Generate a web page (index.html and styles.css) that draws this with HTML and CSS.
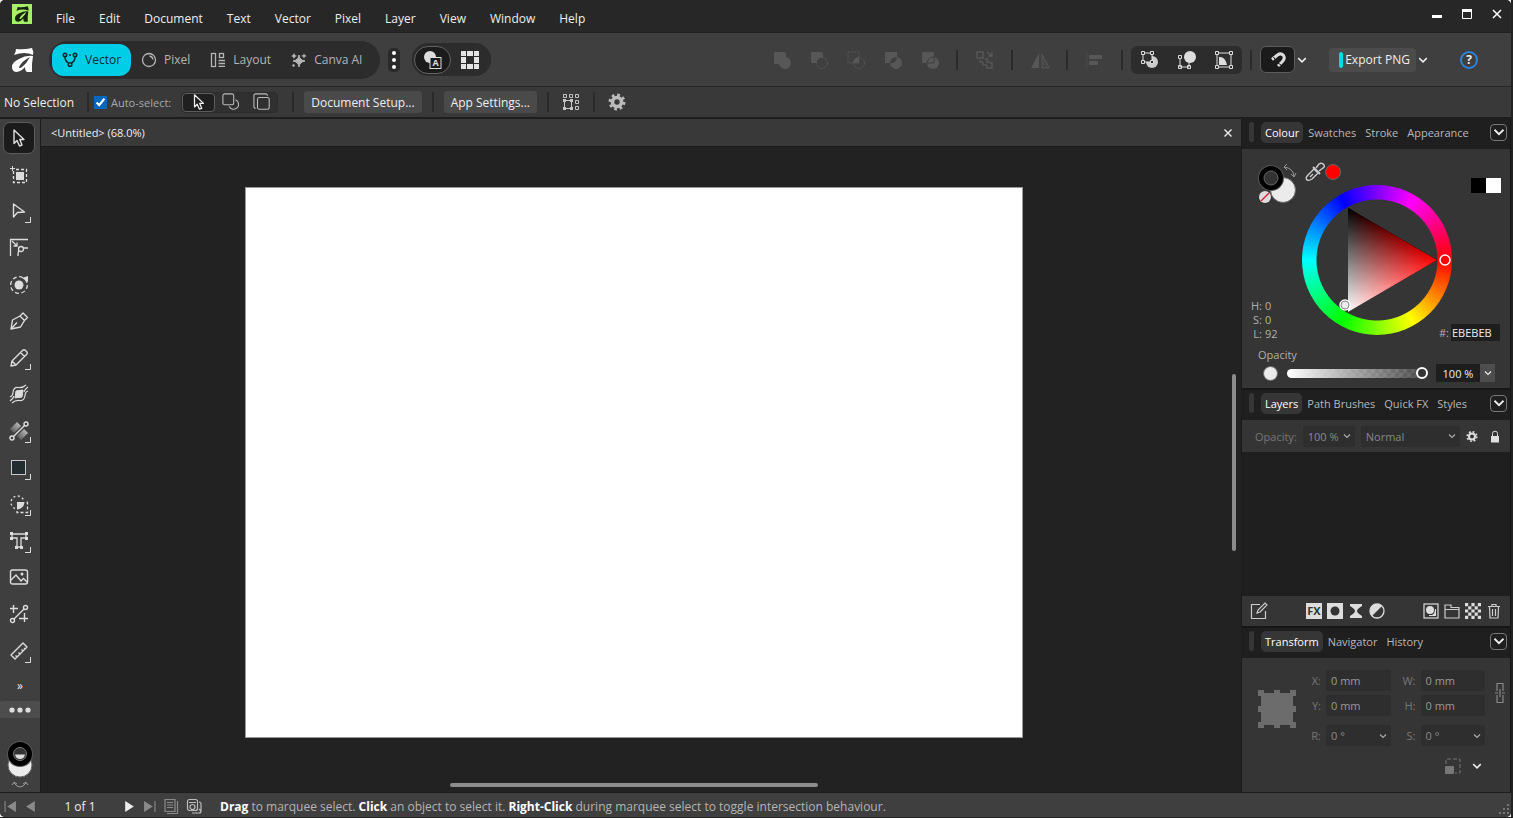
FILE: index.html
```html
<!DOCTYPE html>
<html lang="en">
<head>
    <meta charset="UTF-8">
    <meta name="viewport" content="width=device-width, initial-scale=1.0">
    <title>Untitled</title>
    <link rel="stylesheet" href="styles.css">
</head>
<body>

    <!-- Shared shapes -->
    <svg class="symbols" aria-hidden="true">
        <symbol id="chevron" viewBox="0 0 8 8"><path d="M1 2.5L4 5.5L7 2.5" fill="none" stroke="currentColor" stroke-width="1.2"/></symbol>
        <symbol id="logo" viewBox="0 0 22 24">
            <path d="M4 1Q12 2 20 0Q22 4 21 7Q13 3 2 7Q4 4 4 1Z"/>
            <path fill-rule="evenodd" d="M21 8Q14 7 7 11Q0 14 0 19Q0 24 5 24Q10 23 13 19Q13 23 15 24H20V16ZM18 9Q10 13 7 19Q7 21 10 19Q15 15 18 9Z"/>
        </symbol>
        <symbol id="arrow" viewBox="0 0 20 20"><path d="M5 2V15.500L8 12.500L10.500 18L13 17L10.800 11.500H15Z" fill="none" stroke="currentColor" stroke-width="1.4" stroke-linejoin="round"/></symbol>
        <symbol id="corner" viewBox="0 0 6 6"><path d="M5.500 0V5.500H0" fill="none" stroke="currentColor"/></symbol>
    </svg>

    <div class="frame">
    <div class="window">

        <!-- Menu bar -->
        <header class="menu-bar">
            <svg class="app-icon" viewBox="0 0 20 20"><rect width="20" height="20" fill="#a6f065"/><use href="#logo" x="3" y="2" width="14" height="16" fill="#17220f"/></svg>
            <nav class="menu">
                <a href="#">File</a>
                <a href="#">Edit</a>
                <a href="#">Document</a>
                <a href="#">Text</a>
                <a href="#">Vector</a>
                <a href="#">Pixel</a>
                <a href="#">Layer</a>
                <a href="#">View</a>
                <a href="#">Window</a>
                <a href="#">Help</a>
            </nav>
            <div class="window-buttons">
                <button aria-label="Minimise"><svg viewBox="0 0 10 10"><path d="M0 7.500H10" stroke="#fff" stroke-width="3"/></svg></button>
                <button aria-label="Maximise"><svg viewBox="0 0 10 10"><path d="M0.500 0.500H9.500V9.500H0.500Z" fill="none" stroke="#fff"/><path d="M0 1.500H10" stroke="#fff" stroke-width="3"/></svg></button>
                <button aria-label="Close"><svg viewBox="0 0 10 10"><path d="M1 1L9 9M9 1L1 9" stroke="#fff" stroke-width="1.500"/></svg></button>
            </div>
        </header>

        <!-- Main toolbar -->
        <div class="toolbar">
            <svg class="brand" viewBox="0 0 22 24"><use href="#logo" fill="#fff"/></svg>
            <div class="personas">
                <button class="persona active">
                    <svg viewBox="0 0 16 16"><g fill="none" stroke="currentColor" stroke-width="1.600"><circle cx="3" cy="3" r="1.700"/><circle cx="13" cy="3" r="1.700"/><circle cx="8" cy="12.500" r="1.800"/><path d="M3 5Q3 9 6.500 11M13 5Q13 9 9.500 11M8 2V4"/></g></svg>
                    Vector
                </button>
                <button class="persona">
                    <svg viewBox="0 0 16 16"><g fill="none" stroke="currentColor" stroke-width="1.300"><circle cx="8" cy="8" r="6.500"/><path d="M8.500 4Q11.500 4.500 12 7.500"/></g></svg>
                    Pixel
                </button>
                <button class="persona">
                    <svg viewBox="0 0 16 16"><g fill="none" stroke="currentColor" stroke-width="1.300"><rect x="1.500" y="1.500" width="4" height="13"/><rect x="9.500" y="1.500" width="4" height="4"/><path d="M8.500 8.500H15M8.500 11.500H15M8.500 14.300H15"/></g></svg>
                    Layout
                </button>
                <button class="persona">
                    <svg viewBox="0 0 16 16"><path d="M8 3Q8.500 8 14 9Q8.500 10 8 15Q7.500 10 2 9Q7.500 8 8 3Z" fill="currentColor" stroke="currentColor"/><path d="M3 1L4 3L6 4L4 5L3 7L2 5L0 4L2 3ZM13 1L13.700 3L16 4L13.700 4.700L13 7L12.300 4.700L10 4L12.300 3ZM3 12L4 14L2 15L1 13Z" fill="currentColor"/></svg>
                    Canva AI
                </button>
            </div>
            <button class="dots" aria-label="More personas"><svg viewBox="0 0 12 24"><g fill="#fff"><circle cx="6" cy="5" r="2"/><circle cx="6" cy="12" r="2"/><circle cx="6" cy="19" r="2"/></g></svg></button>
            <div class="view-modes">
                <button class="view-mode active" aria-label="Preview"><svg viewBox="0 0 20 20"><circle cx="7" cy="7" r="6" fill="#ddd"/><rect x="7" y="7.500" width="11" height="11" fill="#1b1b1b" stroke="#ddd"/><text x="12.500" y="16" text-anchor="middle" class="icon-text">A</text></svg></button>
                <button class="view-mode" aria-label="Grid"><svg viewBox="0 0 20 20"><path d="M1 1H6V6H1ZM7 1H13V6H7ZM14 1H19V6H14ZM1 7H6V13H1ZM14 7H19V13H14ZM1 14H6V19H1ZM7 14H13V19H7ZM14 14H19V19H14Z" fill="#e4e4e4"/></svg></button>
            </div>

            <div class="toolbar-right">
                <div class="faded">
                    <button disabled aria-label="Add"><svg viewBox="0 0 20 20"><path d="M3 2H12Q14 2 14 4V7A6 6 0 1 1 7 14H3Q2 14 2 12V4Q2 2 3 2Z" fill="#575757"/></svg></button>
                    <button disabled aria-label="Subtract"><svg viewBox="0 0 20 20"><path d="M3 2H12Q14 2 14 4V7Q8 7 7 13H3Q2 13 2 12V4Q2 2 3 2Z" fill="#575757"/><circle cx="13" cy="13" r="5.500" fill="none" stroke="#575757" stroke-dasharray="3 1"/></svg></button>
                    <button disabled aria-label="Intersect"><svg viewBox="0 0 20 20"><g fill="none" stroke="#575757" stroke-dasharray="2 1"><path d="M2 2H13V13H2Z"/><circle cx="13" cy="13" r="5.500"/></g><path d="M7 13Q8 7 13 7V13Z" fill="#575757"/></svg></button>
                    <button disabled aria-label="Divide"><svg viewBox="0 0 20 20"><path d="M3 2H14V7Q8 7 7 13H2V3Z" fill="#575757"/><path d="M14 7A6 6 0 1 1 7 13Q13 14 14 7Z" fill="#575757"/></svg></button>
                    <button disabled aria-label="Combine"><svg viewBox="0 0 20 20"><rect x="2" y="2" width="12" height="11" rx="1" fill="#575757"/><circle cx="13" cy="13" r="6" fill="#575757"/><path d="M7 13Q8 7 14 7V13Z" fill="none" stroke="#3f3f3f"/></svg></button>
                    <i class="sep"></i>
                    <button disabled aria-label="Arrange"><svg viewBox="0 0 20 20"><g fill="none" stroke="#575757" stroke-width="1.500"><rect x="2" y="2" width="6" height="6"/><path d="M5 10V12H8M8 12V15H12M12 15V18H17V13H15M10 9H12V12H15M12 2L17 6M17 2V6H13"/></g></svg></button>
                    <i class="sep"></i>
                    <button disabled aria-label="Flip"><svg viewBox="0 0 20 20"><path d="M9 3V18H1Z" fill="#575757"/><path d="M12 4V18H19ZM12 8L18 16M12 12L17 18M12 16L14 18" fill="none" stroke="#575757"/></svg></button>
                    <i class="sep"></i>
                    <button disabled aria-label="Align"><svg viewBox="0 0 20 20"><path d="M2 3V19" stroke="#4a4a4a"/><rect x="4" y="5" width="13" height="4" rx="1" fill="#575757"/><rect x="4" y="11" width="9" height="4" rx="1" fill="#575757"/></svg></button>
                    <i class="sep"></i>
                </div>
                <div class="insert-modes">
                    <button aria-label="Insert behind"><svg viewBox="0 0 20 20"><circle cx="12" cy="12" r="6" fill="#ccc"/><rect x="3" y="3" width="9" height="9" fill="#2f2f2f"/><g fill="none" stroke="#ddd"><rect x="3" y="3" width="9" height="9"/><path d="M1.500 1.500H4.500V4.500H1.500ZM10.500 1.500H13.500V4.500H10.500ZM1.500 10.500H4.500V13.500H1.500ZM10.500 10.500H13.500V13.500H10.500Z" fill="#2f2f2f"/></g></svg></button>
                    <button aria-label="Insert on top"><svg viewBox="0 0 20 20"><g fill="none" stroke="#ddd"><path d="M3 8V17H12V12M1.500 5.500H4.500V8.500H1.500ZM1.500 15.500H4.500V18.500H1.500ZM10.500 15.500H13.500V18.500H10.500Z"/></g><circle cx="13" cy="7" r="6" fill="#ddd"/></svg></button>
                    <button aria-label="Insert inside"><svg viewBox="0 0 20 20"><g fill="#2f2f2f" stroke="#ddd"><rect x="3" y="3" width="14" height="14"/><path d="M1.500 1.500H4.500V4.500H1.500ZM15.500 1.500H18.500V4.500H15.500ZM1.500 15.500H4.500V18.500H1.500ZM15.500 15.500H18.500V18.500H15.500Z"/></g><path d="M5 7Q11 6 13 15H5Z" fill="#ddd"/></svg></button>
                </div>
                <i class="sep"></i>
                <button class="snap" aria-label="Snapping"><svg viewBox="0 0 20 20"><path d="M4 9.500L9.500 5Q13 2.500 15.500 5.500Q17.500 8.500 14 12L10 16" fill="none" stroke="#ddd" stroke-width="3"/><path d="M5.500 7L7.500 10M10 13L13 15" stroke="#1b1b1b"/></svg></button>
                <button class="drop" aria-label="Snapping options"><svg><use href="#chevron"/></svg></button>
                <button class="export"><i></i>Export PNG</button>
                <button class="drop" aria-label="Export options"><svg><use href="#chevron"/></svg></button>
                <button class="help" aria-label="Help">?</button>
            </div>
        </div>

        <!-- Context bar -->
        <div class="context-bar">
            <span class="selection">No Selection</span>
            <i class="sep"></i>
            <label class="auto-select"><input type="checkbox" checked>Auto-select:</label>
            <div class="select-modes">
                <button class="active" aria-label="Object"><svg viewBox="0 0 20 20"><use href="#arrow"/></svg></button>
                <button aria-label="Group"><svg viewBox="0 0 20 20"><g fill="none" stroke="#bbb" stroke-width="1.200"><rect x="1" y="1" width="12" height="12" rx="2"/><path d="M15 7.500A5.500 5.500 0 1 1 8 15"/></g></svg></button>
                <button aria-label="Layer"><svg viewBox="0 0 20 20"><g fill="none" stroke="#bbb" stroke-width="1.200"><rect x="5" y="5" width="13" height="13" rx="2"/><path d="M3 17Q1 17 1 15V3Q1 1 3 1H14Q16 1 16 3"/></g></svg></button>
            </div>
            <i class="sep wide"></i>
            <button class="plain">Document Setup...</button>
            <i class="sep"></i>
            <button class="plain">App Settings...</button>
            <i class="sep"></i>
            <button class="icon" aria-label="Transform objects separately"><svg viewBox="0 0 18 18"><g fill="none" stroke="#c4c4c4"><path d="M1.500 1.500H4.500V4.500H1.500ZM7.500 1.500H10.500V4.500H7.500ZM13.500 1.500H16.500V4.500H13.500ZM13.500 7.500H16.500V10.500H13.500ZM13.500 13.500H16.500V16.500H13.500ZM2.500 7.500H9.500V15.500H2.500Z"/><path d="M1 7.500H4M8 7.500H11M1 15.500H4M8 15.500H11" stroke-width="3"/></g></svg></button>
            <i class="sep"></i>
            <button class="icon" aria-label="Settings"><svg viewBox="0 0 20 20"><circle cx="10" cy="10" r="5" fill="none" stroke="#bbb" stroke-width="4"/><circle cx="10" cy="10" r="7.800" fill="none" stroke="#bbb" stroke-width="3.200" stroke-dasharray="3.060 3.060"/></svg></button>
        </div>

        <div class="workspace">

            <!-- Tools -->
            <aside class="tools">
                <div class="tool-list">
                    <button class="tool active" aria-label="Move"><svg viewBox="0 0 20 20"><use href="#arrow"/></svg></button>
                    <button class="tool" aria-label="Artboard"><svg viewBox="0 0 20 20"><rect x="7" y="7" width="8" height="8" fill="#ddd"/><path d="M4.500 6V17.500H17.500V4.500H6" fill="none" stroke="#ddd" stroke-width="1.300" stroke-dasharray="3 2"/><path d="M1 3.500H6M3.500 1V6" stroke="#ddd"/></svg></button>
                    <button class="tool" aria-label="Node"><svg viewBox="0 0 20 20"><path d="M4.500 3V16L8.500 11.500L15.500 11Z" fill="none" stroke="#ddd" stroke-width="1.400" stroke-linejoin="round"/></svg><svg class="corner"><use href="#corner"/></svg></button>
                    <button class="tool" aria-label="Corner"><svg viewBox="0 0 20 20"><g fill="none" stroke="#ddd" stroke-width="1.300"><path d="M1 1.500H19M1.500 1V18M3 3L8 8M8 4.500V8H4.500M9 18Q9 12 11 10H19"/><circle cx="12" cy="11" r="2.500" fill="#3f3f3f"/></g></svg></button>
                    <button class="tool" aria-label="Contour"><svg viewBox="0 0 20 20"><circle cx="10" cy="10" r="4.500" fill="#ddd"/><circle cx="10" cy="10" r="8.300" fill="none" stroke="#ddd" stroke-width="1.300" stroke-dasharray="4 2.500"/><path d="M13 3L19 1V7Z" fill="#ddd"/></svg></button>
                    <button class="tool" aria-label="Pen"><svg viewBox="0 0 20 20"><g fill="none" stroke="#ddd" stroke-width="1.400" stroke-linejoin="round"><path d="M2 18L3.500 9L11 5L15.500 9.500L11.500 16ZM2 18L8 11.500M11.500 4.500L14 2L18.500 6.500L16 9"/></g></svg></button>
                    <button class="tool" aria-label="Pencil"><svg viewBox="0 0 20 20"><g fill="none" stroke="#ddd" stroke-width="1.400" stroke-linejoin="round"><path d="M2 18L3 13L13.500 2.500Q15 1 16.500 2.500L17.500 3.500Q19 5 17.500 6.500L7 17ZM11.500 4.500L15.500 8.500M3 13L7 17"/></g></svg><svg class="corner"><use href="#corner"/></svg></button>
                    <button class="tool" aria-label="Vector brush"><svg viewBox="0 0 20 20"><path d="M7 7L14 6L13 13L6 14Z" fill="#ddd" stroke="#ddd" stroke-linejoin="round"/><path d="M1 13Q4 12 4 8Q5 3 9 3.500Q14 4 17 1M1 17Q4 15 5 12M15 8Q16 5 19 3M3 19Q6 16 11 16.500Q15 17 16 12Q16 8 19 7" fill="none" stroke="#ddd" stroke-width="1.200"/></svg></button>
                    <button class="tool" aria-label="Gradient"><svg viewBox="0 0 20 20"><defs><linearGradient id="bar" x1="1" y1="0" x2="0" y2="1"><stop stop-color="#ccc"/><stop offset="1" stop-color="#4a4a4a"/></linearGradient></defs><path d="M1 8L8 1L12 5L5 12Z" fill="url(#bar)"/><path d="M8 15L15 8L19 12L12 19Z" fill="url(#bar)"/><g fill="none" stroke="#ddd" stroke-width="1.400"><path d="M4.500 15.500L15.500 4.500"/><circle cx="3" cy="17" r="2"/><circle cx="17" cy="3" r="2"/></g></svg><svg class="corner"><use href="#corner"/></svg></button>
                    <button class="tool" aria-label="Rectangle"><svg viewBox="0 0 20 20"><rect x="2.500" y="2.500" width="14" height="14" fill="#232d30" stroke="#c8c8c8"/></svg><svg class="corner"><use href="#corner"/></svg></button>
                    <button class="tool" aria-label="Shape builder"><svg viewBox="0 0 20 20"><g fill="none" stroke="#ddd" stroke-width="1.300"><path d="M6 14.500A6.500 6.500 0 1 1 14.500 6" stroke-dasharray="2 2.500"/><path d="M8 17V18.500H18.500V8.500H17" stroke-dasharray="3 2"/></g><path d="M8 8H15.500Q15 15 8 15.500Z" fill="#ddd"/></svg><svg class="corner"><use href="#corner"/></svg></button>
                    <button class="tool" aria-label="Text"><svg viewBox="0 0 20 20"><g fill="none" stroke="#ddd" stroke-width="1.300"><path d="M3 3H17V7H12V16H8V7H3Z"/></g><path d="M1 1H4V4H1ZM16 1H19V4H16ZM1 6H4V9H1ZM16 6H19V9H16ZM6 15H9V18H6ZM11 15H14V18H11Z" fill="#ddd"/></svg><svg class="corner"><use href="#corner"/></svg></button>
                    <button class="tool" aria-label="Image"><svg viewBox="0 0 20 20"><g fill="none" stroke="#ddd" stroke-width="1.400"><rect x="1.500" y="3" width="17" height="14" rx="2"/><path d="M2 13L7 8L12 14L14.500 11.500L18 15"/></g><circle cx="13" cy="7" r="1.500" fill="#ddd"/></svg></button>
                    <button class="tool" aria-label="Vector crop"><svg viewBox="0 0 20 20"><g fill="none" stroke="#ddd" stroke-width="1.400"><path d="M4.500 1V9M1 4.500H9M15.500 9V18M10 14.500H19M5 15L15 5"/><circle cx="3.500" cy="16.500" r="2"/><circle cx="16.500" cy="3.500" r="2"/></g></svg></button>
                    <button class="tool" aria-label="Measure"><svg viewBox="0 0 20 20"><g fill="none" stroke="#ddd" stroke-width="1.400" stroke-linejoin="round"><path d="M2 14L14 2L18 6L6 18ZM8 16L6.500 14.500M11 13L9.500 11.500M14 10L12.500 8.500M16 8L15 7"/></g></svg><svg class="corner"><use href="#corner"/></svg></button>
                </div>
                <button class="more">»</button>
                <button class="ellipsis" aria-label="Customise tools"><svg viewBox="0 0 24 6"><g fill="#e0e0e0"><circle cx="4" cy="3" r="2.600"/><circle cx="12" cy="3" r="2.600"/><circle cx="20" cy="3" r="2.600"/></g></svg></button>
                <button class="tool-colours" aria-label="Fill and stroke"><svg viewBox="0 0 30 52"><circle cx="15" cy="25" r="12" fill="#ebebeb" stroke="#666"/><circle cx="15" cy="14" r="13" fill="#555"/><circle cx="15" cy="14" r="9" fill="none" stroke="#000" stroke-width="6"/><circle cx="15" cy="14" r="6.500" fill="#333" stroke="#777"/><path d="M10 14.500H20Q19 19 15 19Q11 19 10 14.500Z" fill="#ddd"/><path d="M9 43Q15 51 21 43M7 45L9 42L12 44M18 44L21 42L23 45" fill="none" stroke="#999"/></svg></button>
            </aside>

            <!-- Document -->
            <main class="document">
                <div class="document-tab">
                    <span>&lt;Untitled&gt; (68.0%)</span>
                    <button aria-label="Close document"><svg viewBox="0 0 10 10"><path d="M1.500 1.500L8.500 8.500M8.500 1.500L1.500 8.500" stroke="#eee" stroke-width="1.400"/></svg></button>
                </div>
                <div class="canvas">
                    <div class="stage"><div class="page"></div></div>
                    <div class="scroll-v"><i></i></div>
                    <div class="scroll-h"><i></i></div>
                </div>
            </main>

            <!-- Studio panels -->
            <aside class="studio">
                <section class="panel">
                    <div class="tabs">
                        <i class="handle"></i>
                        <button class="tab active">Colour</button>
                        <button class="tab">Swatches</button>
                        <button class="tab">Stroke</button>
                        <button class="tab">Appearance</button>
                        <button class="panel-menu" aria-label="Colour panel menu"><svg><use href="#chevron"/></svg></button>
                    </div>
                    <div class="colour">
                        <div class="colour-left">
                            <svg class="fill-stroke" viewBox="0 0 42 42"><circle cx="27" cy="27" r="12.500" fill="#ebebeb" stroke="#666"/><circle cx="15" cy="15" r="13" fill="#555"/><circle cx="15" cy="15" r="9" fill="none" stroke="#000" stroke-width="6"/><circle cx="15" cy="15" r="7" fill="#333" stroke="#666"/><circle cx="9" cy="34" r="6" fill="#ddd"/><path d="M5 38L13 30" stroke="#e0203a" stroke-width="1.500"/><path d="M28 4Q37 5 38 13M31 1L28 4L31 7M35 11L38 14L40 10" fill="none" stroke="#999"/></svg>
                            <dl class="hsl">
                                <dt>H:</dt><dd>0</dd>
                                <dt>S:</dt><dd>0</dd>
                                <dt>L:</dt><dd>92</dd>
                            </dl>
                        </div>
                        <div class="colour-middle">
                            <div class="picker">
                                <button aria-label="Colour picker"><svg viewBox="0 0 20 20"><g fill="none" stroke="#ccc" stroke-width="1.400" stroke-linejoin="round"><path d="M2 18Q0 16 3 13L9 7L13 11L7 17Q4 19 2 18ZM5 15L8 12"/><path d="M8 5L15 12" stroke-width="2"/><path d="M11 6L14 2Q17 0 19 3Q20 5 18 6L14 9"/></g></svg></button>
                                <i class="picked"></i>
                            </div>
                            <div class="wheel">
                                <svg viewBox="0 0 150 150">
                                    <defs>
                                        <linearGradient id="to-red" gradientUnits="userSpaceOnUse" x1="46" y1="75" x2="135" y2="75"><stop stop-color="#000"/><stop offset="1" stop-color="#f00"/></linearGradient>
                                        <linearGradient id="to-white" gradientUnits="userSpaceOnUse" x1="91" y1="49" x2="46" y2="127"><stop stop-color="#000"/><stop offset="1" stop-color="#fff"/></linearGradient>
                                    </defs>
                                    <g class="triangle">
                                        <path d="M46 23L135 75L46 127Z" fill="url(#to-red)"/>
                                        <path class="lighter" d="M46 23L135 75L46 127Z" fill="url(#to-white)"/>
                                    </g>
                                    <circle cx="143" cy="75" r="5" fill="#f00" stroke="#fff" stroke-width="1.500"/>
                                    <circle cx="43" cy="120" r="5" fill="#ebebeb" stroke="#fff" stroke-width="1.500"/>
                                    <circle cx="43" cy="120" r="4" fill="none" stroke="#888"/>
                                </svg>
                            </div>
                        </div>
                        <div class="colour-right">
                            <div class="black-white"><i></i><i></i></div>
                            <label class="hex">#:<input type="text" value="EBEBEB"></label>
                        </div>
                    </div>
                    <div class="opacity">
                        <label for="opacity">Opacity</label>
                        <div class="opacity-row">
                            <i class="opacity-colour"></i>
                            <input type="range" id="opacity" value="100">
                            <input type="text" class="opacity-value" value="100 %" aria-label="Opacity value">
                            <button class="opacity-drop" aria-label="Opacity slider"><svg><use href="#chevron"/></svg></button>
                        </div>
                    </div>
                </section>

                <section class="panel layers">
                    <div class="tabs">
                        <i class="handle"></i>
                        <button class="tab active">Layers</button>
                        <button class="tab">Path Brushes</button>
                        <button class="tab">Quick FX</button>
                        <button class="tab">Styles</button>
                        <button class="panel-menu" aria-label="Layers panel menu"><svg><use href="#chevron"/></svg></button>
                    </div>
                    <div class="layer-options">
                        <label for="layer-opacity">Opacity:</label>
                        <span class="select layer-opacity"><select id="layer-opacity" disabled><option>100 %</option></select><svg><use href="#chevron"/></svg></span>
                        <span class="select blend"><select aria-label="Blend mode" disabled><option>Normal</option></select><svg><use href="#chevron"/></svg></span>
                        <button aria-label="Blend options"><svg viewBox="0 0 12 12"><circle cx="6" cy="6" r="3" fill="none" stroke="#e0e0e0" stroke-width="2"/><circle cx="6" cy="6" r="4.800" fill="none" stroke="#e0e0e0" stroke-width="1.600" stroke-dasharray="1.885 1.885"/></svg></button>
                        <button aria-label="Lock"><svg viewBox="0 0 12 12"><rect x="2" y="5.500" width="8" height="6.500" fill="#e0e0e0"/><path d="M3.500 6V3Q3.500 0.700 6 0.700Q8.500 0.700 8.500 3V6" fill="none" stroke="#e0e0e0"/></svg></button>
                    </div>
                    <div class="layer-list"></div>
                    <div class="layer-actions">
                        <button aria-label="Edit all layers"><svg viewBox="0 0 18 18"><path d="M10 2.500H1.500V16.500H15.500V9M7 11L8 8L15 1L17 3L10 10Z" fill="none" stroke="#ccc" stroke-width="1.200"/></svg></button>
                        <div class="action-group">
                            <button aria-label="Layer FX"><svg viewBox="0 0 16 16"><rect width="16" height="16" fill="#ddd"/><text x="8" y="12" text-anchor="middle" class="fx-text">FX</text></svg></button>
                            <button aria-label="Mask"><svg viewBox="0 0 16 16"><rect width="16" height="16" fill="#ddd"/><circle cx="8" cy="8" r="4.500" fill="#333"/></svg></button>
                            <button aria-label="Live filter"><svg viewBox="0 0 16 16"><path d="M2 1H14V3Q9 6 9 8Q9 10 14 13V15H2V13Q7 10 7 8Q7 6 2 3Z" fill="#ddd"/></svg></button>
                            <button aria-label="Adjustment"><svg viewBox="0 0 16 16"><circle cx="8" cy="8" r="7" fill="none" stroke="#ddd" stroke-width="1.300"/><path d="M13 3A7 7 0 0 0 3 13Z" fill="#ddd"/></svg></button>
                        </div>
                        <div class="action-group">
                            <button aria-label="Mask layer"><svg viewBox="0 0 16 16"><rect x="1" y="1" width="14" height="14" fill="none" stroke="#ddd" stroke-width="1.200"/><circle cx="7" cy="7" r="4" fill="#ddd"/><path d="M12 6H13V13H6V12H9Q12 11 12 6Z" fill="#ddd"/></svg></button>
                            <button aria-label="Add group"><svg viewBox="0 0 16 16"><path d="M1 6.500V2H7V4.500H15V15H1V6.500H15" fill="none" stroke="#ccc" stroke-width="1.200"/></svg></button>
                            <button aria-label="Add pixel layer"><svg viewBox="0 0 15 15"><path d="M0 1.500H15M0 7.500H15M0 13.500H15" stroke="#ddd" stroke-width="3" stroke-dasharray="3 3"/><path d="M3 4.500H15M3 10.500H15" stroke="#ddd" stroke-width="3" stroke-dasharray="3 3"/></svg></button>
                            <button aria-label="Delete"><svg viewBox="0 0 16 16"><path d="M2 3.500H14M6 3V1.500H10V3M3.500 4L4 15H12L12.500 4M6.500 6V13M9.500 6V13" fill="none" stroke="#ccc" stroke-width="1.200"/></svg></button>
                        </div>
                    </div>
                </section>

                <section class="panel">
                    <div class="tabs">
                        <i class="handle"></i>
                        <button class="tab active">Transform</button>
                        <button class="tab">Navigator</button>
                        <button class="tab">History</button>
                        <button class="panel-menu" aria-label="Transform panel menu"><svg><use href="#chevron"/></svg></button>
                    </div>
                    <div class="transform">
                        <svg class="anchor" viewBox="0 0 38 38"><path d="M0 0H6V3H16V0H22V3H32V0H38V6H35V16H38V22H35V32H38V38H32V35H22V38H16V35H6V38H0V32H3V22H0V16H3V6H0Z" fill="#6c6c6c"/></svg>
                        <div class="fields">
                            <label for="x">X:</label><input type="text" id="x" value="0 mm" disabled>
                            <label for="w">W:</label><input type="text" id="w" value="0 mm" disabled>
                            <label for="y">Y:</label><input type="text" id="y" value="0 mm" disabled>
                            <label for="h">H:</label><input type="text" id="h" value="0 mm" disabled>
                            <label for="r">R:</label><span class="select"><select id="r" disabled><option>0 °</option></select><svg><use href="#chevron"/></svg></span>
                            <label for="s">S:</label><span class="select"><select id="s" disabled><option>0 °</option></select><svg><use href="#chevron"/></svg></span>
                        </div>
                        <svg class="link" viewBox="0 0 10 22"><path d="M2 9V1.500H8V9M2 13V20.500H8V13M5 7V15M0 11H3M7 11H10" fill="none" stroke="#888" stroke-width="1.200"/></svg>
                    </div>
                    <div class="scale">
                        <svg viewBox="0 0 16 16"><rect y="8" width="9" height="8" rx="1" fill="#777"/><path d="M1 6V1H15V15H10" fill="none" stroke="#777" stroke-dasharray="4 2"/></svg>
                        <button class="drop" aria-label="Scale options"><svg><use href="#chevron"/></svg></button>
                    </div>
                </section>
            </aside>
        </div>

        <!-- Status bar -->
        <footer class="status-bar">
            <div class="pager">
                <button aria-label="First page"><svg viewBox="0 0 12 12"><path d="M1 1V11" stroke="#8a8a8a"/><path d="M11 1V11L3 6Z" fill="#8a8a8a"/></svg></button>
                <button aria-label="Previous page"><svg viewBox="0 0 12 12"><path d="M10 1V11L2 6Z" fill="#8a8a8a"/></svg></button>
                <span>1 of 1</span>
                <button aria-label="Next page"><svg viewBox="0 0 12 12"><path d="M2 1V11L10 6Z" fill="#eee"/></svg></button>
                <button aria-label="Last page"><svg viewBox="0 0 12 12"><path d="M11 1V11" stroke="#8a8a8a"/><path d="M1 1V11L9 6Z" fill="#8a8a8a"/></svg></button>
                <button class="big" aria-label="Pages"><svg viewBox="0 0 16 16"><path d="M2 1.500H12V13.500H2ZM14.500 3V15.500H4M4 4.500H10M4 7H10M4 9.500H10" fill="none" stroke="#8a8a8a" stroke-width="1.200"/></svg></button>
                <button class="big" aria-label="Spreads"><svg viewBox="0 0 16 16"><g fill="none" stroke="#bbb" stroke-width="1.200"><rect x="1.500" y="1.500" width="10" height="11" rx="2"/><path d="M13 4Q15 4 15 6V13Q15 15 13 15H6M13 11L15 13M3 4.500H10"/><circle cx="6.500" cy="9" r="2.500"/></g></svg></button>
            </div>
            <p><b>Drag</b> to marquee select. <b>Click</b> an object to select it. <b>Right-Click</b> during marquee select to toggle intersection behaviour.</p>
            <svg class="grip" viewBox="0 0 10 10"><path d="M8 0H10V2H8ZM8 4H10V6H8ZM4 4H6V6H4ZM8 8H10V10H8ZM4 8H6V10H4ZM0 8H2V10H0Z" fill="#777"/></svg>
        </footer>
    </div>
    </div>

</body>
</html>
```
FILE: styles.css
```css
* {
    box-sizing: border-box;
}

body {
    margin: 0;
    height: 100vh;
    background: #222;
    padding: 0 2px 1px 0;
    font-family: "Open Sans", "Noto Sans", sans-serif;
    font-size: 12px;
    color: #eee;
}

.symbols {
    display: none;
}

.frame {
    height: 100%;
    background: #eee;
}

.window {
    display: flex;
    flex-direction: column;
    height: 100%;
    background: #1c1c1c;
    border-radius: 5px;
    overflow: hidden;
}

svg {
    display: block;
    flex: none;
}

button, input, select {
    font: inherit;
    color: inherit;
    background: none;
    border: none;
    padding: 0;
    margin: 0;
}

button {
    display: flex;
    align-items: center;
    justify-content: center;
    flex: none;
}

a {
    color: inherit;
    text-decoration: none;
}

.sep {
    flex: none;
    width: 2px;
    height: 20px;
    margin: 0 8px;
    background: #2a2a2a;
}

/* Menu bar */
.menu-bar {
    display: flex;
    height: 33px;
    flex: none;
    background: #272727;
    border-bottom: 1px solid #202020;
    padding: 4px 9px 0 12px;
}

.app-icon {
    width: 20px;
    height: 20px;
}

.menu {
    display: flex;
    gap: 24px;
    padding: 6px 0 0 24px;
    line-height: 18px;
}

.window-buttons {
    display: flex;
    gap: 20px;
    margin-left: auto;
    height: 20px;
}

.window-buttons svg {
    width: 10px;
    height: 10px;
}

/* Toolbar */
.toolbar {
    display: flex;
    align-items: center;
    height: 54px;
    flex: none;
    background: #3f3f3f;
    border-bottom: 1px solid #262626;
    padding: 0 33px 0 12px;
}

.brand {
    width: 22px;
    height: 24px;
    margin-right: 15px;
}

.personas {
    display: flex;
    height: 38px;
    padding: 3px 8px 3px 3px;
    border-radius: 19px;
    background: #2c2c2c;
}

.persona {
    gap: 7px;
    padding: 0 10px;
    border-radius: 12px;
    color: #b5b5b5;
}

.persona svg {
    width: 16px;
    height: 16px;
}

.persona.active {
    background: #00cde6;
    color: #0d2b30;
}

.dots {
    width: 12px;
    height: 24px;
    margin: 0 12px 0 8px;
    border-radius: 5px;
    background: #2a2a2a;
}

.dots svg {
    width: 12px;
    height: 24px;
}

.view-modes {
    display: flex;
    align-items: center;
    height: 33px;
    width: 79px;
    padding: 0 2px;
    border-radius: 16px;
    background: #2c2c2c;
}

.view-mode {
    width: 37px;
    height: 28px;
    border-radius: 14px;
}

.view-mode.active {
    background: #1b1b1b;
    border: 1px solid #636363;
}

.view-mode svg,
.toolbar-right svg {
    width: 20px;
    height: 20px;
}

.icon-text {
    font-size: 9px;
    font-weight: bold;
    fill: #ddd;
}

.toolbar-right {
    display: flex;
    align-items: center;
    margin-left: auto;
}

.faded {
    display: flex;
    align-items: center;
}

.faded button,
.insert-modes button {
    width: 37px;
}

.insert-modes {
    display: flex;
    height: 28px;
    border-radius: 6px;
    background: #2c2c2c;
}

.snap {
    width: 35px;
    height: 27px;
    border: 1px solid #5c5c5c;
    border-radius: 6px;
    background: #1b1b1b;
}

.drop {
    width: 14px;
    height: 20px;
}

.toolbar-right .drop svg,
.drop svg {
    width: 10px;
    height: 10px;
}

.export {
    gap: 2px;
    height: 24px;
    margin-left: 20px;
    padding: 0 6px 0 10px;
    border-radius: 4px;
    background: #4b4b4b;
}

.export i {
    width: 4px;
    height: 16px;
    border-radius: 2px;
    background: #00dbe8;
}

.help {
    width: 18px;
    height: 18px;
    margin-left: 30px;
    border: 2px solid #2d82dc;
    border-radius: 50%;
    font-weight: bold;
    line-height: 14px;
}

/* Context bar */
.context-bar {
    display: flex;
    align-items: center;
    height: 32px;
    flex: none;
    background: #393939;
    border-bottom: 2px solid #1e1e1e;
    padding: 0 4px;
}

.context-bar .sep {
    margin: 0 10px;
}

.context-bar .sep.wide {
    margin-left: 14px;
}

.selection {
    width: 73px;
    white-space: nowrap;
}

.context-bar .selection + .sep {
    margin-right: 5px;
}

.auto-select {
    display: flex;
    align-items: center;
    gap: 4px;
    color: #a8a8a8;
    font-size: 11px;
}

.auto-select input {
    width: 13px;
    height: 13px;
    accent-color: #0067c0;
}

.select-modes {
    display: flex;
    width: 97px;
    height: 21px;
    margin-left: 10px;
    border: 1px solid #2c2c2c;
    border-radius: 4px;
    background: #303030;
}

.select-modes button {
    flex: 1;
}

.select-modes .active {
    border: 1px solid #5c5c5c;
    border-radius: 4px;
    background: #1f1f1f;
}

.select-modes svg,
.icon svg {
    width: 18px;
    height: 18px;
}

.plain {
    height: 22px;
    padding: 0 7px;
    border-radius: 3px;
    background: #4a4a4a;
}

.icon {
    width: 24px;
}

/* Workspace */
.workspace {
    display: flex;
    flex: 1;
    min-height: 0;
}

.tools {
    display: flex;
    flex-direction: column;
    align-items: center;
    width: 40px;
    flex: none;
    padding-top: 1px;
    background: #3f3f3f;
}

.tool-list {
    display: grid;
    grid-auto-rows: 1fr;
    align-items: center;
    align-self: flex-start;
    flex: 1;
    margin-left: 3px;
}

.tool {
    position: relative;
    width: 32px;
    height: 32px;
    color: #ddd;
}

.tool svg {
    width: 20px;
    height: 20px;
}

.tool .corner {
    position: absolute;
    right: 4px;
    bottom: 4px;
    width: 6px;
    height: 6px;
}

.tool.active {
    border: 1px solid #5c5c5c;
    border-radius: 7px;
    background: #1b1b1b;
}

.more {
    height: 32px;
}

.ellipsis {
    width: 40px;
    height: 17px;
    background: #4d4d4d;
    border-radius: 2px;
}

.ellipsis svg {
    width: 24px;
    height: 6px;
}

.tool-colours {
    margin-top: 22px;
}

.tool-colours svg {
    width: 30px;
    height: 52px;
}

.document {
    display: flex;
    flex-direction: column;
    flex: 1;
    min-width: 0;
    margin: 0 1px;
}

.document-tab {
    display: flex;
    align-items: center;
    justify-content: space-between;
    height: 27px;
    flex: none;
    padding: 0 8px 0 10px;
    background: #393939;
    font-size: 11px;
}

.document-tab svg {
    width: 10px;
    height: 10px;
}

.canvas {
    display: grid;
    grid-template-columns: 1fr 14px;
    grid-template-rows: 1fr 14px;
    flex: 1;
    background: #222;
    border-top: 1px solid #1a1a1a;
}

.stage {
    display: grid;
    place-items: center;
}

.page {
    width: 65.6%;
    aspect-ratio: 297 / 210;
    background: #fff;
    border: 1px solid #999;
}

.scroll-v, .scroll-h {
    display: flex;
    align-items: center;
    justify-content: center;
}

.scroll-v i {
    width: 4px;
    height: 28%;
    border-radius: 2px;
    background: #8c8c8c;
}

.scroll-h i {
    width: 31%;
    height: 4px;
    border-radius: 2px;
    background: #8c8c8c;
}

/* Panels */
.studio {
    display: flex;
    flex-direction: column;
    width: 269px;
    flex: none;
    padding-right: 1px;
    gap: 2px;
    background: #161616;
    font-size: 11px;
}

.panel {
    background: #353535;
}

.panel:last-child {
    flex: none;
    height: 164px;
}

.tabs {
    display: flex;
    align-items: center;
    gap: 1px;
    height: 30px;
    padding: 0 3px 4px 7px;
    background: #1f1f1f;
}

.handle {
    width: 5px;
    height: 20px;
    margin-right: 6px;
    border-radius: 3px;
    background: #363636;
}

.tab {
    height: 21px;
    padding: 0 4px;
    border-radius: 5px;
    color: #b8b8b8;
    white-space: nowrap;
}

.tab.active {
    background: #363636;
    color: #fff;
}

.panel-menu {
    width: 17px;
    height: 17px;
    margin-left: auto;
    border: 1px solid #777;
    border-radius: 4px;
}

.panel-menu svg {
    width: 12px;
    height: 12px;
}

.colour {
    display: grid;
    grid-template-columns: 60px 150px minmax(0, 1fr);
    padding: 12px 9px 0 0;
}

.colour-left {
    display: flex;
    flex-direction: column;
    justify-content: space-between;
}

.fill-stroke {
    width: 42px;
    height: 42px;
    margin: 2px 0 0 14px;
}

.hsl {
    display: grid;
    grid-template-columns: 20px 1fr;
    column-gap: 3px;
    line-height: 14px;
    margin: 0 0 -6px;
    color: #b0b0b0;
}

.hsl dt {
    text-align: right;
}

.hsl dd {
    margin: 0;
}

.picker {
    display: flex;
    align-items: center;
    height: 24px;
    padding: 0 0 2px 3px;
}

.picker svg {
    width: 20px;
    height: 20px;
}

.picked {
    width: 16px;
    height: 16px;
    border: 1px solid #666;
    border-radius: 50%;
    background: #f00;
}

.wheel {
    width: 150px;
    height: 150px;
    border-radius: 50%;
    background: radial-gradient(circle, #353535 60px, transparent 61px), conic-gradient(from 90deg, #f00, #ff0, #0f0, #0ff, #00f, #f0f, #f00);
}

.triangle {
    isolation: isolate;
}

.lighter {
    mix-blend-mode: plus-lighter;
}

.colour-right {
    display: flex;
    flex-direction: column;
    justify-content: space-between;
    align-items: flex-end;
    padding-top: 17px;
}

.black-white {
    display: flex;
    background: #fff;
}

.black-white i {
    width: 15px;
    height: 15px;
}

.black-white i:first-child {
    background: #000;
}

.hex {
    display: flex;
    align-items: center;
    gap: 2px;
    margin: 0 1px -6px 0;
    color: #b0b0b0;
}

.hex input {
    width: 49px;
    height: 17px;
    padding: 0 1px;
    background: #1e1e1e;
    color: #eee;
}

.opacity {
    padding: 12px 15px 4px 16px;
}

.opacity label {
    color: #b0b0b0;
    line-height: 15px;
    display: block;
}

.opacity-row {
    display: flex;
    align-items: center;
    height: 22px;
}

.opacity-colour {
    width: 15px;
    height: 15px;
    margin: 0 9px 0 5px;
    border: 1px solid #666;
    border-radius: 50%;
    background: #ebebeb;
}

.opacity-row input[type="range"] {
    appearance: none;
    flex: 1;
    min-width: 0;
    height: 9px;
    border-radius: 5px;
    background: linear-gradient(to right, #fff, transparent), repeating-conic-gradient(#505050 0 25%, #404040 0 50%) 0 0 / 8px 8px;
}

.opacity-row input[type="range"]::-webkit-slider-thumb {
    appearance: none;
    width: 12px;
    height: 12px;
    border: 2px solid #fff;
    border-radius: 50%;
    background: #353535;
}

.opacity-value {
    width: 44px;
    height: 18px;
    margin-left: 8px;
    background: #1e1e1e;
    text-align: center;
}

.opacity-drop {
    width: 15px;
    height: 18px;
    background: #4d4d4d;
}

.opacity-drop svg {
    width: 8px;
    height: 8px;
}

.layers {
    display: flex;
    flex-direction: column;
    flex: 1;
}

.layer-options {
    display: flex;
    align-items: center;
    height: 32px;
    padding: 0 9px 0 13px;
    gap: 6px;
    color: #777;
}

.select {
    display: grid;
    align-items: center;
    height: 21px;
    border-radius: 2px;
    background: #2e2e2e;
    color: #888;
}

.select select {
    appearance: none;
    grid-area: 1 / 1;
    width: 100%;
    height: 100%;
    padding: 0 5px;
    opacity: 1;
}

.select svg {
    grid-area: 1 / 1;
    justify-self: end;
    width: 8px;
    height: 8px;
    margin-right: 4px;
    color: #aaa;
    pointer-events: none;
}

.layer-opacity {
    width: 52px;
}

.blend {
    flex: 1;
}

.layer-options button svg {
    width: 12px;
    height: 13px;
}

.layer-options button + button {
    margin-left: 5px;
}

.layer-list {
    flex: 1;
    background: #1f1f1f;
}

.layer-actions {
    display: flex;
    align-items: center;
    height: 30px;
    padding: 0 8px;
}

.layer-actions svg {
    width: 16px;
    height: 16px;
}

.layer-actions > button svg {
    width: 18px;
    height: 18px;
}

.action-group {
    display: flex;
    gap: 5px;
    margin-left: auto;
}

.fx-text {
    font-size: 11px;
    font-weight: bold;
    fill: #333;
}

.transform {
    display: flex;
    align-items: center;
    padding: 12px 5px 0 16px;
}

.anchor {
    width: 38px;
    height: 38px;
    margin-top: 2px;
}

.fields {
    display: grid;
    grid-template-columns: 20px 1fr 20px 1fr;
    gap: 4px 5px;
    align-items: center;
    flex: 1;
    margin-left: 5px;
    color: #777;
}

.fields label {
    text-align: right;
}

.fields input {
    width: 100%;
    min-width: 0;
    height: 21px;
    padding: 0 5px;
    border-radius: 2px;
    background: #2e2e2e;
    color: #999;
}

.fields label:nth-of-type(n+5),
.fields .select {
    margin-top: 5px;
}

.link {
    width: 10px;
    height: 22px;
    align-self: flex-start;
    margin: 12px 0 0 10px;
}

.scale {
    display: flex;
    align-items: center;
    gap: 9px;
    justify-content: flex-end;
    padding: 10px 26px 0 0;
}

.scale svg {
    width: 16px;
    height: 16px;
}

.scale .drop svg {
    width: 10px;
    height: 10px;
}

/* Status bar */
.status-bar {
    display: flex;
    align-items: center;
    height: 24px;
    flex: none;
    margin-top: 1px;
    padding: 2px 2px 0 4px;
    background: #3f3f3f;
    color: #b5b5b5;
}

.status-bar p {
    margin: 0 auto 0 18px;
    white-space: nowrap;
}

.status-bar b {
    color: #fff;
}

.pager {
    display: flex;
    align-items: center;
    gap: 7px;
}

.pager span {
    width: 72px;
    text-align: center;
    color: #eee;
}

.pager svg {
    width: 13px;
    height: 13px;
}

.pager .big svg {
    width: 16px;
    height: 16px;
}

.grip {
    width: 10px;
    height: 10px;
    align-self: flex-end;
    margin-bottom: 3px;
}
```
